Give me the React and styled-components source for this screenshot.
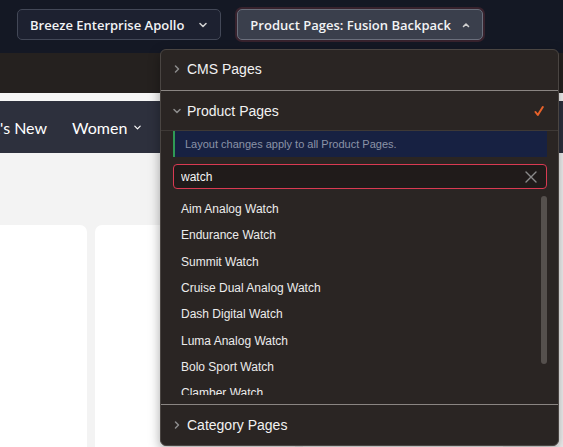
import React from "react";
import styled, { createGlobalStyle } from "styled-components";

const GlobalStyle = createGlobalStyle`
  html, body { margin: 0; padding: 0; }
  body {
    background: #f3f3f3;
    overflow: hidden;
    font-family: "Liberation Sans", Arial, sans-serif;
  }
  * { box-sizing: border-box; }
`;

const Page = styled.div`
  position: relative;
  width: 563px;
  height: 447px;
  overflow: hidden;
  background: #f3f3f3;
`;

const TopBar = styled.div`
  height: 53px;
  background: #141824;
  display: flex;
  align-items: flex-start;
  gap: 16px;
  padding: 9px 0 0 17px;
`;

const SelectButton = styled.button`
  height: 31px;
  display: flex;
  align-items: center;
  gap: ${(p) => (p.$open ? "10px" : "14px")};
  padding: 0 ${(p) => (p.$open ? "11px" : "12px")} 0 12px;
  border-radius: 5px;
  border: 1px solid ${(p) => (p.$open ? "#6a6f7c" : "#434857")};
  background: ${(p) => (p.$open ? "#3a3f4c" : "#1d2130")};
  box-shadow: ${(p) => (p.$open ? "0 0 0 2px #37222d" : "none")};
  color: #f2f3f5;
  font-family: "Open Sans", sans-serif;
  font-weight: 600;
  font-size: 13px;
  white-space: nowrap;
  cursor: pointer;
`;

const Band = styled.div`
  height: 40px;
  background: #25211f;
`;

const Gap = styled.div`
  height: 8px;
  background: #f6f6f6;
`;

const Nav = styled.nav`
  height: 52px;
  background: #2d303d;
  display: flex;
  align-items: center;
  gap: 25px;
  margin-left: -39px;
  font-family: Lato, sans-serif;
  font-size: 16px;
  color: #ffffff;
`;

const NavItem = styled.span`
  display: flex;
  align-items: center;
  gap: 6px;
  white-space: nowrap;
`;

const Content = styled.div`
  display: flex;
  gap: 8px;
  padding-top: 72px;
  margin-left: -113px;
`;

const Card = styled.div`
  width: 200px;
  height: 260px;
  flex-shrink: 0;
  background: #ffffff;
  border-radius: 7px;
`;

const Panel = styled.div`
  position: absolute;
  left: 160px;
  top: 49px;
  width: 399px;
  height: 397px;
  background: #2a2523;
  border: 1px solid #4a4542;
  border-radius: 6px;
  display: flex;
  flex-direction: column;
  box-shadow: 0 4px 12px rgba(0, 0, 0, 0.35);
  color: #f0f0f0;
`;

const SectionHead = styled.div`
  height: ${(p) => p.$h}px;
  flex-shrink: 0;
  display: flex;
  align-items: center;
  gap: 6px;
  padding: 0 14px ${(p) => p.$pb || 0}px 12px;
  font-size: 14px;
  color: #f2f2f2;
  border-bottom: ${(p) => (p.$divider ? `1px solid ${p.$divider}` : "none")};
  border-top: ${(p) => (p.$top ? `1px solid ${p.$top}` : "none")};
`;

const HeadLabel = styled.span`
  flex: 1;
`;

const Body = styled.div`
  padding: 0 11px 0 12px;
  display: flex;
  flex-direction: column;
`;

const Info = styled.div`
  height: 26px;
  background: #172142;
  border-left: 2px solid #2f9a55;
  display: flex;
  align-items: center;
  padding-left: 10px;
  font-size: 11px;
  color: #8b93a7;
`;

const Search = styled.div`
  margin-top: 7px;
  height: 25px;
  border: 1px solid #d93a52;
  border-radius: 4px;
  background: #201b1a;
  display: flex;
  align-items: center;
  padding: 0 8px 0 7px;
`;

const SearchInput = styled.input`
  flex: 1;
  border: none;
  outline: none;
  background: transparent;
  color: #f4f4f4;
  font-family: "Liberation Sans", Arial, sans-serif;
  font-size: 12px;
  padding: 0;
`;

const ListWrap = styled.div`
  position: relative;
  margin-top: 7px;
  height: 199px;
`;

const List = styled.ul`
  list-style: none;
  margin: 0;
  padding: 0;
  height: 100%;
  overflow: hidden;
`;

const Thumb = styled.div`
  position: absolute;
  right: 0;
  top: 0;
  width: 6px;
  height: 168px;
  border-radius: 3px;
  background: #55504d;
`;

const Item = styled.li`
  height: 26.3px;
  display: flex;
  align-items: center;
  padding-left: 8px;
  font-size: 12px;
  color: #ececec;
`;

const Spacer = styled.div`
  flex: 1;
`;

const ChevronDown = ({ size = 10, color = "#d0d0d0", sw = 1.6 }) => (
  <svg width={size} height={size} viewBox="0 0 10 10" fill="none">
    <path d="M2 3.5 L5 6.5 L8 3.5" stroke={color} strokeWidth={sw} strokeLinecap="round" strokeLinejoin="round" />
  </svg>
);

const ChevronUp = ({ size = 10, color = "#d0d0d0", sw = 1.6 }) => (
  <svg width={size} height={size} viewBox="0 0 10 10" fill="none">
    <path d="M2.5 6.5 L5 4 L7.5 6.5" stroke={color} strokeWidth={sw} strokeLinecap="round" strokeLinejoin="round" />
  </svg>
);

const ChevronRight = ({ color = "#8c8c8c" }) => (
  <svg width="8" height="10" viewBox="0 0 8 10" fill="none">
    <path d="M2.5 2 L5.5 5 L2.5 8" stroke={color} strokeWidth="1.5" strokeLinecap="round" strokeLinejoin="round" />
  </svg>
);

const ChevronSmallDown = ({ color = "#8c8c8c" }) => (
  <svg width="8" height="10" viewBox="0 0 8 10" fill="none">
    <path d="M1 3.5 L4 6.5 L7 3.5" stroke={color} strokeWidth="1.5" strokeLinecap="round" strokeLinejoin="round" />
  </svg>
);

const Check = () => (
  <svg width="10" height="12" viewBox="0 0 10 12" fill="none">
    <path d="M1.5 7 L3.8 10 L8.8 2" stroke="#e8622a" strokeWidth="2" strokeLinecap="round" strokeLinejoin="round" />
  </svg>
);

const Close = () => (
  <svg width="14" height="14" viewBox="0 0 14 14" fill="none">
    <path d="M2 2 L12 12 M12 2 L2 12" stroke="#8a8a8a" strokeWidth="1.4" strokeLinecap="round" />
  </svg>
);

const watches = [
  "Aim Analog Watch",
  "Endurance Watch",
  "Summit Watch",
  "Cruise Dual Analog Watch",
  "Dash Digital Watch",
  "Luma Analog Watch",
  "Bolo Sport Watch",
  "Clamber Watch",
  "Didi Sport Watch",
];

export default function App() {
  return (
    <Page>
      <GlobalStyle />
      <TopBar>
        <SelectButton>
          Breeze Enterprise Apollo
          <ChevronDown />
        </SelectButton>
        <SelectButton $open>
          Product Pages: Fusion Backpack
          <ChevronUp />
        </SelectButton>
      </TopBar>
      <Band />
      <Gap />
      <Nav>
        <NavItem>What's New</NavItem>
        <NavItem>
          Women
          <ChevronDown size={9} color="#ffffff" sw={1.3} />
        </NavItem>
        <NavItem>Men</NavItem>
        <NavItem>Gear</NavItem>
        <NavItem>Training</NavItem>
        <NavItem>Sale</NavItem>
      </Nav>
      <Content>
        <Card />
        <Card />
        <Card />
      </Content>

      <Panel>
        <SectionHead $h={41} $pb={2} $divider="#8a8582">
          <ChevronRight />
          <HeadLabel>CMS Pages</HeadLabel>
        </SectionHead>
        <SectionHead $h={40} $divider="#3e3936">
          <ChevronSmallDown />
          <HeadLabel>Product Pages</HeadLabel>
          <Check />
        </SectionHead>
        <Body>
          <Info>Layout changes apply to all Product Pages.</Info>
          <Search>
            <SearchInput defaultValue="watch" />
            <Close />
          </Search>
          <ListWrap>
            <List>
              {watches.map((w) => (
                <Item key={w}>{w}</Item>
              ))}
            </List>
            <Thumb />
          </ListWrap>
        </Body>
        <Spacer />
        <SectionHead $h={41} $top="#8a8582">
          <ChevronRight />
          <HeadLabel>Category Pages</HeadLabel>
        </SectionHead>
      </Panel>
    </Page>
  );
}
